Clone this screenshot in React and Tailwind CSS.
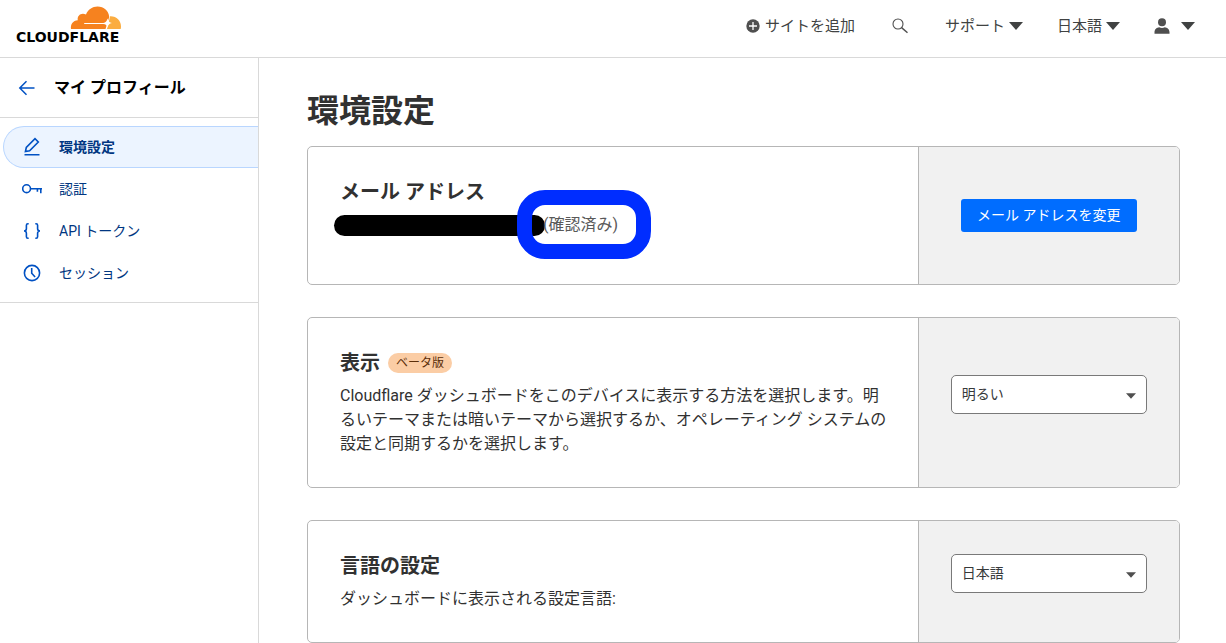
const Caret = ({ className = "w-[14px] h-2" }) => (
  <svg className={className} viewBox="0 0 14 8" fill="currentColor" aria-hidden="true">
    <path d="M0 0h14L7 8z" />
  </svg>
);

const Logo = () => (
  <a href="#" aria-label="Cloudflare" className="flex w-[106px] flex-col text-black">
    <svg className="h-6 w-[52px] self-end" viewBox="0 0 52 24" aria-hidden="true">
      <path fill="#fbad41" d="M40 10.300C46.500 10 51 14.500 51 20.500c0 1-.1 1.800-.3 2.500H37L38.600 17z" />
      <path
        fill="#f6821f"
        d="M1 23C.2 18.500 3 14.500 7.800 14.200 6.800 9.500 11.600 6 16 8.600 17.800 3.600 22.500.5 27.500.5 34 .5 38.800 5 39.200 11L37.200 17.500 35.500 23z"
      />
      <path
        fill="#fff"
        d="M14.200 16.900H33.300c2.600-.5 3.500-1.500 4.200-4.400.7 2.900 1.700 3.900 4.500 4.600-2.800.7-3.800 1.700-4.500 4.500-.7-2.500-1.600-3.400-4.200-3.700H14.200z"
      />
    </svg>
    <span className="font-['DejaVu_Sans'] text-[14px] leading-[14px] font-bold">CLOUDFLARE</span>
  </a>
);

const stroke = {
  fill: "none",
  stroke: "currentColor",
  strokeWidth: 1.6,
  className: "w-5 h-5",
  viewBox: "0 0 20 20",
  "aria-hidden": true,
};

const PencilIcon = () => (
  <svg {...stroke}>
    <path d="M2.500 17.700h15M3.400 14.600l.9-4.100 8.700-8.800 3.300 3.300-8.700 8.800z" />
  </svg>
);
const KeyIcon = () => (
  <svg {...stroke}>
    <circle cx="4.600" cy="9.700" r="3.900" />
    <path d="M8.500 9.700H20M15.400 9.700v3M18.800 9.700v4.600" />
  </svg>
);
const BracesIcon = () => (
  <svg {...stroke}>
    <path d="M6.700 2.700H5.900Q4.400 2.700 4.400 4.300V7.800Q4.400 10 2 10 4.400 10 4.400 12.200V15.700Q4.400 17.300 5.900 17.300H6.700M13.300 2.700h.8q1.500 0 1.500 1.600V7.800Q15.600 10 18 10 15.600 10 15.600 12.200v3.500q0 1.600-1.500 1.600h-.8" />
  </svg>
);
const ClockIcon = () => (
  <svg {...stroke}>
    <circle cx="10" cy="10" r="7.600" />
    <path d="M9.700 5v5.300l3.400 3.700" />
  </svg>
);

const navItems = [
  { label: "環境設定", Icon: PencilIcon, active: true },
  { label: "認証", Icon: KeyIcon },
  { label: "API トークン", Icon: BracesIcon },
  { label: "セッション", Icon: ClockIcon },
];

const Card = ({ children, action }) => (
  <section className="flex overflow-hidden rounded-[5px] border border-[#b6b6b6]">
    <div className="flex-1 pt-8 pr-7 pb-[31px] pl-8">{children}</div>
    <div className="flex w-[30%] flex-col justify-center border-l border-[#b6b6b6] bg-[#f1f1f1] px-8">
      {action}
    </div>
  </section>
);

const CardTitle = ({ children }) => (
  <h2 className="text-[20px] leading-[26px] font-semibold">{children}</h2>
);

const Select = ({ label, options }) => (
  <div className="relative mb-4">
    <select
      aria-label={label}
      className="h-[39px] w-full appearance-none rounded-[5px] border border-[#797979] bg-white pr-8 pb-[2px] pl-[10px] text-sm text-[#36393a]"
    >
      {options.map((o) => (
        <option key={o}>{o}</option>
      ))}
    </select>
    <Caret className="pointer-events-none absolute top-[18px] right-[11px] h-[6px] w-[10px] text-[#4f4f4f]" />
  </div>
);

export default function App() {
  return (
    <div
      lang="ja"
      className="flex min-h-screen flex-col bg-white font-[Roboto,'Noto_Sans_CJK_JP',sans-serif] text-[#313131]"
    >
      <header className="flex h-[58px] items-start justify-between border-b border-[#d9d9d9] pt-[6px] pr-[31px] pl-4">
        <Logo />
        <div className="flex h-10 items-center gap-[34px] text-[15px] text-[#404242]">
          <a href="#" className="flex items-center gap-[5px]">
            <svg className="h-[14px] w-[14px]" viewBox="0 0 14 14" aria-hidden="true">
              <circle cx="7" cy="7" r="6.700" fill="#4f4f4f" />
              <path d="M7 3v8M3 7h8" stroke="#fff" strokeWidth="1.300" />
            </svg>
            サイトを追加
          </a>
          <button type="button" aria-label="検索" className="px-[3px]">
            <svg className="h-4 w-4" viewBox="0 0 16 16" fill="none" stroke="#4f4f4f" strokeWidth="1.100" aria-hidden="true">
              <circle cx="6" cy="6" r="5" />
              <path d="M9.600 9.600l5.900 5.200" strokeWidth="1.400" />
            </svg>
          </button>
          <button type="button" className="flex items-center gap-1">
            サポート
            <Caret />
          </button>
          <button type="button" className="flex items-center gap-1">
            日本語
            <Caret />
          </button>
          <button type="button" aria-label="アカウント" className="flex items-center gap-[11px]">
            <svg className="h-4 w-4" viewBox="0 0 16 16" fill="#4f4f4f" aria-hidden="true">
              <circle cx="8" cy="4.300" r="4" />
              <path d="M.5 15.700v-1.500C.5 11 3 9.500 5.200 9.200c1.700.9 3.900.9 5.600 0C13 9.500 15.500 11 15.500 14.200v1.500z" />
            </svg>
            <Caret />
          </button>
        </div>
      </header>

      <div className="flex flex-1">
        <aside className="w-[259px] shrink-0 border-r border-[#d9d9d9]">
          <div className="flex h-[60px] items-center gap-[18px] border-b border-[#d9d9d9] pl-[18px]">
            <a href="#" aria-label="戻る" className="text-[#0051c3]">
              <svg className="h-[18px] w-[18px]" viewBox="0 0 18 18" fill="none" stroke="currentColor" strokeWidth="1.500" aria-hidden="true">
                <path d="M16.500 9H2M8.500 2.300L1.800 9l6.700 6.700" />
              </svg>
            </a>
            <span className="text-base font-semibold text-black">マイ プロフィール</span>
          </div>
          <nav className="border-b border-[#d9d9d9] py-2 pl-[3px]">
            {navItems.map(({ label, Icon, active }) => (
              <a
                key={label}
                href="#"
                aria-current={active ? "page" : undefined}
                className={
                  active
                    ? "flex h-[42px] items-center gap-[17px] rounded-l-full border border-r-0 border-[#b9d6ff] bg-[#ecf4ff] pl-[18px] text-sm font-semibold text-[#003681]"
                    : "flex h-[42px] items-center gap-[17px] pl-[19px] text-sm text-[#003681]"
                }
              >
                <span className="text-[#0051c3]">
                  <Icon />
                </span>
                {label}
              </a>
            ))}
          </nav>
        </aside>

        <main className="min-w-0 flex-1 pt-8 pr-[46px] pl-12">
          <h1 className="mb-[14px] text-[32px] leading-[42px] font-semibold">環境設定</h1>
          <div className="flex flex-col gap-8">
            <Card
              action={
                <button
                  type="button"
                  className="h-[33px] self-center rounded-[3px] bg-[#006dff] px-4 pb-[2px] text-sm text-white"
                >
                  メール アドレスを変更
                </button>
              }
            >
              <CardTitle>メール アドレス</CardTitle>
              <p className="mt-2 mb-4 flex items-center leading-6 text-[#595959]">
                <span className="-ml-[6px] h-[21px] w-[211px] rounded-full bg-black" />
                <span className="relative -ml-[2px]">
                  (確認済み)
                  <span className="pointer-events-none absolute -top-[23px] -right-[33px] -bottom-[22px] -left-[26px] rounded-[28px] border-[15px] border-[#002dff]" />
                </span>
              </p>
            </Card>

            <Card action={<Select label="表示" options={["明るい", "暗い", "システム"]} />}>
              <div className="flex items-center gap-2">
                <CardTitle>表示</CardTitle>
                <span className="h-5 rounded-full bg-[#fbcda5] px-2 text-xs leading-5 text-[#5c2f0a]">ベータ版</span>
              </div>
              <p className="mt-2 leading-6">
                Cloudflare ダッシュボードをこのデバイスに表示する方法を選択します。明るいテーマまたは暗いテーマから選択するか、オペレーティング システムの設定と同期するかを選択します。
              </p>
            </Card>

            <Card action={<Select label="言語の設定" options={["日本語", "English"]} />}>
              <CardTitle>言語の設定</CardTitle>
              <p className="mt-2 leading-6">ダッシュボードに表示される設定言語:</p>
            </Card>
          </div>
        </main>
      </div>
    </div>
  );
}
